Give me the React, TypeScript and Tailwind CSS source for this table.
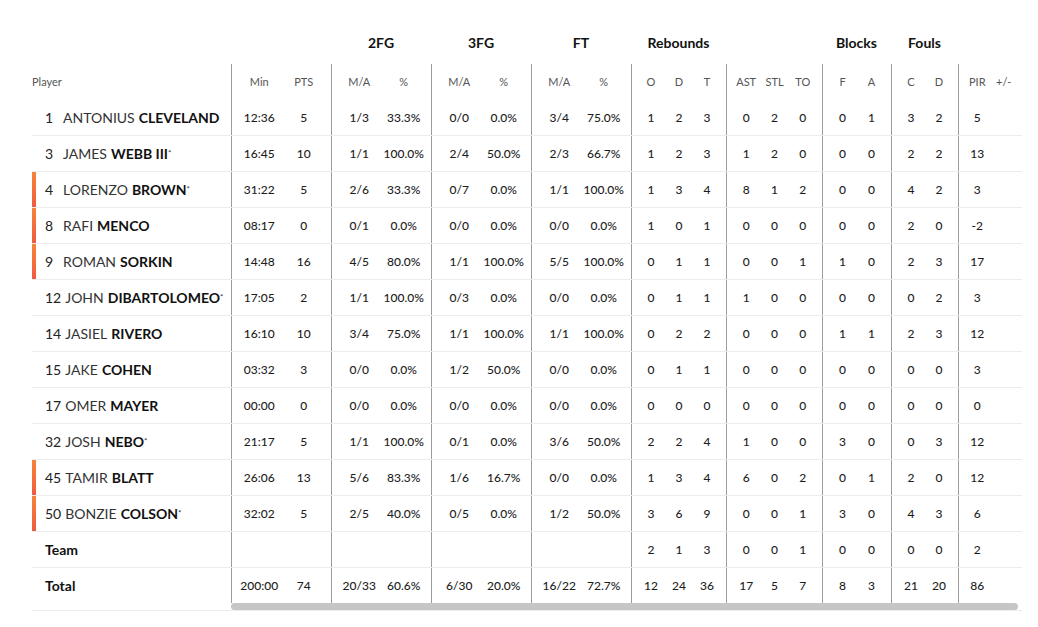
import React from 'react';

type Player = {
  no: string;
  first: string;
  last: string;
  star?: boolean;
  bar?: boolean;
  s: string[][];
};

const players: Player[] = [
  { no: '1', first: 'ANTONIUS', last: 'CLEVELAND', s: [['12:36', '5'], ['1/3', '33.3%'], ['0/0', '0.0%'], ['3/4', '75.0%'], ['1', '2', '3'], ['0', '2', '0'], ['0', '1'], ['3', '2'], ['5', '']] },
  { no: '3', first: 'JAMES', last: 'WEBB III', star: true, s: [['16:45', '10'], ['1/1', '100.0%'], ['2/4', '50.0%'], ['2/3', '66.7%'], ['1', '2', '3'], ['1', '2', '0'], ['0', '0'], ['2', '2'], ['13', '']] },
  { no: '4', first: 'LORENZO', last: 'BROWN', star: true, bar: true, s: [['31:22', '5'], ['2/6', '33.3%'], ['0/7', '0.0%'], ['1/1', '100.0%'], ['1', '3', '4'], ['8', '1', '2'], ['0', '0'], ['4', '2'], ['3', '']] },
  { no: '8', first: 'RAFI', last: 'MENCO', bar: true, s: [['08:17', '0'], ['0/1', '0.0%'], ['0/0', '0.0%'], ['0/0', '0.0%'], ['1', '0', '1'], ['0', '0', '0'], ['0', '0'], ['2', '0'], ['-2', '']] },
  { no: '9', first: 'ROMAN', last: 'SORKIN', bar: true, s: [['14:48', '16'], ['4/5', '80.0%'], ['1/1', '100.0%'], ['5/5', '100.0%'], ['0', '1', '1'], ['0', '0', '1'], ['1', '0'], ['2', '3'], ['17', '']] },
  { no: '12', first: 'JOHN', last: 'DIBARTOLOMEO', star: true, s: [['17:05', '2'], ['1/1', '100.0%'], ['0/3', '0.0%'], ['0/0', '0.0%'], ['0', '1', '1'], ['1', '0', '0'], ['0', '0'], ['0', '2'], ['3', '']] },
  { no: '14', first: 'JASIEL', last: 'RIVERO', s: [['16:10', '10'], ['3/4', '75.0%'], ['1/1', '100.0%'], ['1/1', '100.0%'], ['0', '2', '2'], ['0', '0', '0'], ['1', '1'], ['2', '3'], ['12', '']] },
  { no: '15', first: 'JAKE', last: 'COHEN', s: [['03:32', '3'], ['0/0', '0.0%'], ['1/2', '50.0%'], ['0/0', '0.0%'], ['0', '1', '1'], ['0', '0', '0'], ['0', '0'], ['0', '0'], ['3', '']] },
  { no: '17', first: 'OMER', last: 'MAYER', s: [['00:00', '0'], ['0/0', '0.0%'], ['0/0', '0.0%'], ['0/0', '0.0%'], ['0', '0', '0'], ['0', '0', '0'], ['0', '0'], ['0', '0'], ['0', '']] },
  { no: '32', first: 'JOSH', last: 'NEBO', star: true, s: [['21:17', '5'], ['1/1', '100.0%'], ['0/1', '0.0%'], ['3/6', '50.0%'], ['2', '2', '4'], ['1', '0', '0'], ['3', '0'], ['0', '3'], ['12', '']] },
  { no: '45', first: 'TAMIR', last: 'BLATT', bar: true, s: [['26:06', '13'], ['5/6', '83.3%'], ['1/6', '16.7%'], ['0/0', '0.0%'], ['1', '3', '4'], ['6', '0', '2'], ['0', '1'], ['2', '0'], ['12', '']] },
  { no: '50', first: 'BONZIE', last: 'COLSON', star: true, bar: true, s: [['32:02', '5'], ['2/5', '40.0%'], ['0/5', '0.0%'], ['1/2', '50.0%'], ['3', '6', '9'], ['0', '0', '1'], ['3', '0'], ['4', '3'], ['6', '']] },
];

const teamRow = [['', ''], ['', ''], ['', ''], ['', ''], ['2', '1', '3'], ['0', '0', '1'], ['0', '0'], ['0', '0'], ['2', '']];
const totalRow = [['200:00', '74'], ['20/33', '60.6%'], ['6/30', '20.0%'], ['16/22', '72.7%'], ['12', '24', '36'], ['17', '5', '7'], ['8', '3'], ['21', '20'], ['86', '']];

const widths = ['w-[100px]', 'w-[100px]', 'w-[100px]', 'w-[100px]', 'w-[95px]', 'w-[96px]', 'w-[69px]', 'w-[67px]', 'w-[64px]'];
const groupTitles = ['', '2FG', '3FG', 'FT', 'Rebounds', '', 'Blocks', 'Fouls', ''];
const subHeads = [['Min', 'PTS'], ['M/A', '%'], ['M/A', '%'], ['M/A', '%'], ['O', 'D', 'T'], ['AST', 'STL', 'TO'], ['F', 'A'], ['C', 'D'], ['PIR', '+/-']];

const StatRow: React.FC<{ cells: string[][]; last?: boolean }> = ({ cells, last }) => (
  <div className={`flex ${last ? 'h-[35px]' : 'h-[36px] border-b border-[#ececec]'}`}>
    {cells.map((g, i) => (
      <div key={i} className={`${widths[i]} shrink-0 flex border-l border-[#9c9c9c] px-[5px]`}>
        {g.map((v, j) => (
          <div key={j} className="flex-1 flex items-center justify-center text-[12px] font-medium text-[#1d1d1d]">
            {v}
          </div>
        ))}
      </div>
    ))}
  </div>
);

export default function App() {
  return (
    <div className="bg-white w-[1038px] h-[627px] pl-[32px] pt-[24px]" style={{ fontFamily: 'Lato, "Open Sans", sans-serif' }}>
      <div className="flex w-[990px]">
        {/* Player column */}
        <div className="w-[199px] shrink-0">
          <div className="h-[40px]" />
          <div className="h-[36px] flex items-center text-[11px] text-[#555]">Player</div>
          {players.map((p) => (
            <div key={p.no} className="h-[36px] flex border-b border-[#ececec]">
              <div className={`w-[4px] shrink-0 ${p.bar ? 'bg-gradient-to-b from-[#f5843a] to-[#ef5a3f]' : ''}`} />
              <div className="flex items-center pl-[9px] text-[14px] text-[#222]">
                <span className="min-w-[14px] mr-[4px] shrink-0">{p.no}</span>
                <span className="text-[#333]">{p.first}</span>
                <span className="ml-[4px] font-bold text-[#111]">{p.last}</span>
                {p.star && <span className="text-[8px] self-start mt-[11px] text-[#333]">*</span>}
              </div>
            </div>
          ))}
          <div className="h-[36px] flex items-center pl-[13px] border-b border-[#ececec] text-[14px] font-bold text-[#111]">Team</div>
          <div className="h-[34px] flex items-center pl-[13px] text-[14px] font-bold text-[#111]">Total</div>
          <div className="h-[9px] border-b border-[#ececec]" />
        </div>

        {/* Stats scroll area */}
        <div className="w-[791px] shrink-0">
          <div className="h-[40px] flex pb-[4px]">
            {groupTitles.map((t, i) => (
              <div key={i} className={`${widths[i]} shrink-0 flex items-center justify-center text-[14px] font-bold text-[#111]`}>
                {t}
              </div>
            ))}
          </div>
          <div className="flex h-[36px]">
            {subHeads.map((g, i) => (
              <div key={i} className={`${widths[i]} shrink-0 flex border-l border-[#9c9c9c] px-[5px]`}>
                {g.map((v, j) => (
                  <div key={j} className="flex-1 flex items-center justify-center text-[11px] text-[#555]">
                    {v}
                  </div>
                ))}
              </div>
            ))}
          </div>
          {players.map((p) => (
            <StatRow key={p.no} cells={p.s} />
          ))}
          <StatRow cells={teamRow} />
          <StatRow cells={totalRow} last />
          <div className="h-[8px] border-b border-[#ececec] pr-[4px]">
            <div className="h-[7px] rounded-full bg-[#c6c6c6]" />
          </div>
        </div>
      </div>
    </div>
  );
}
